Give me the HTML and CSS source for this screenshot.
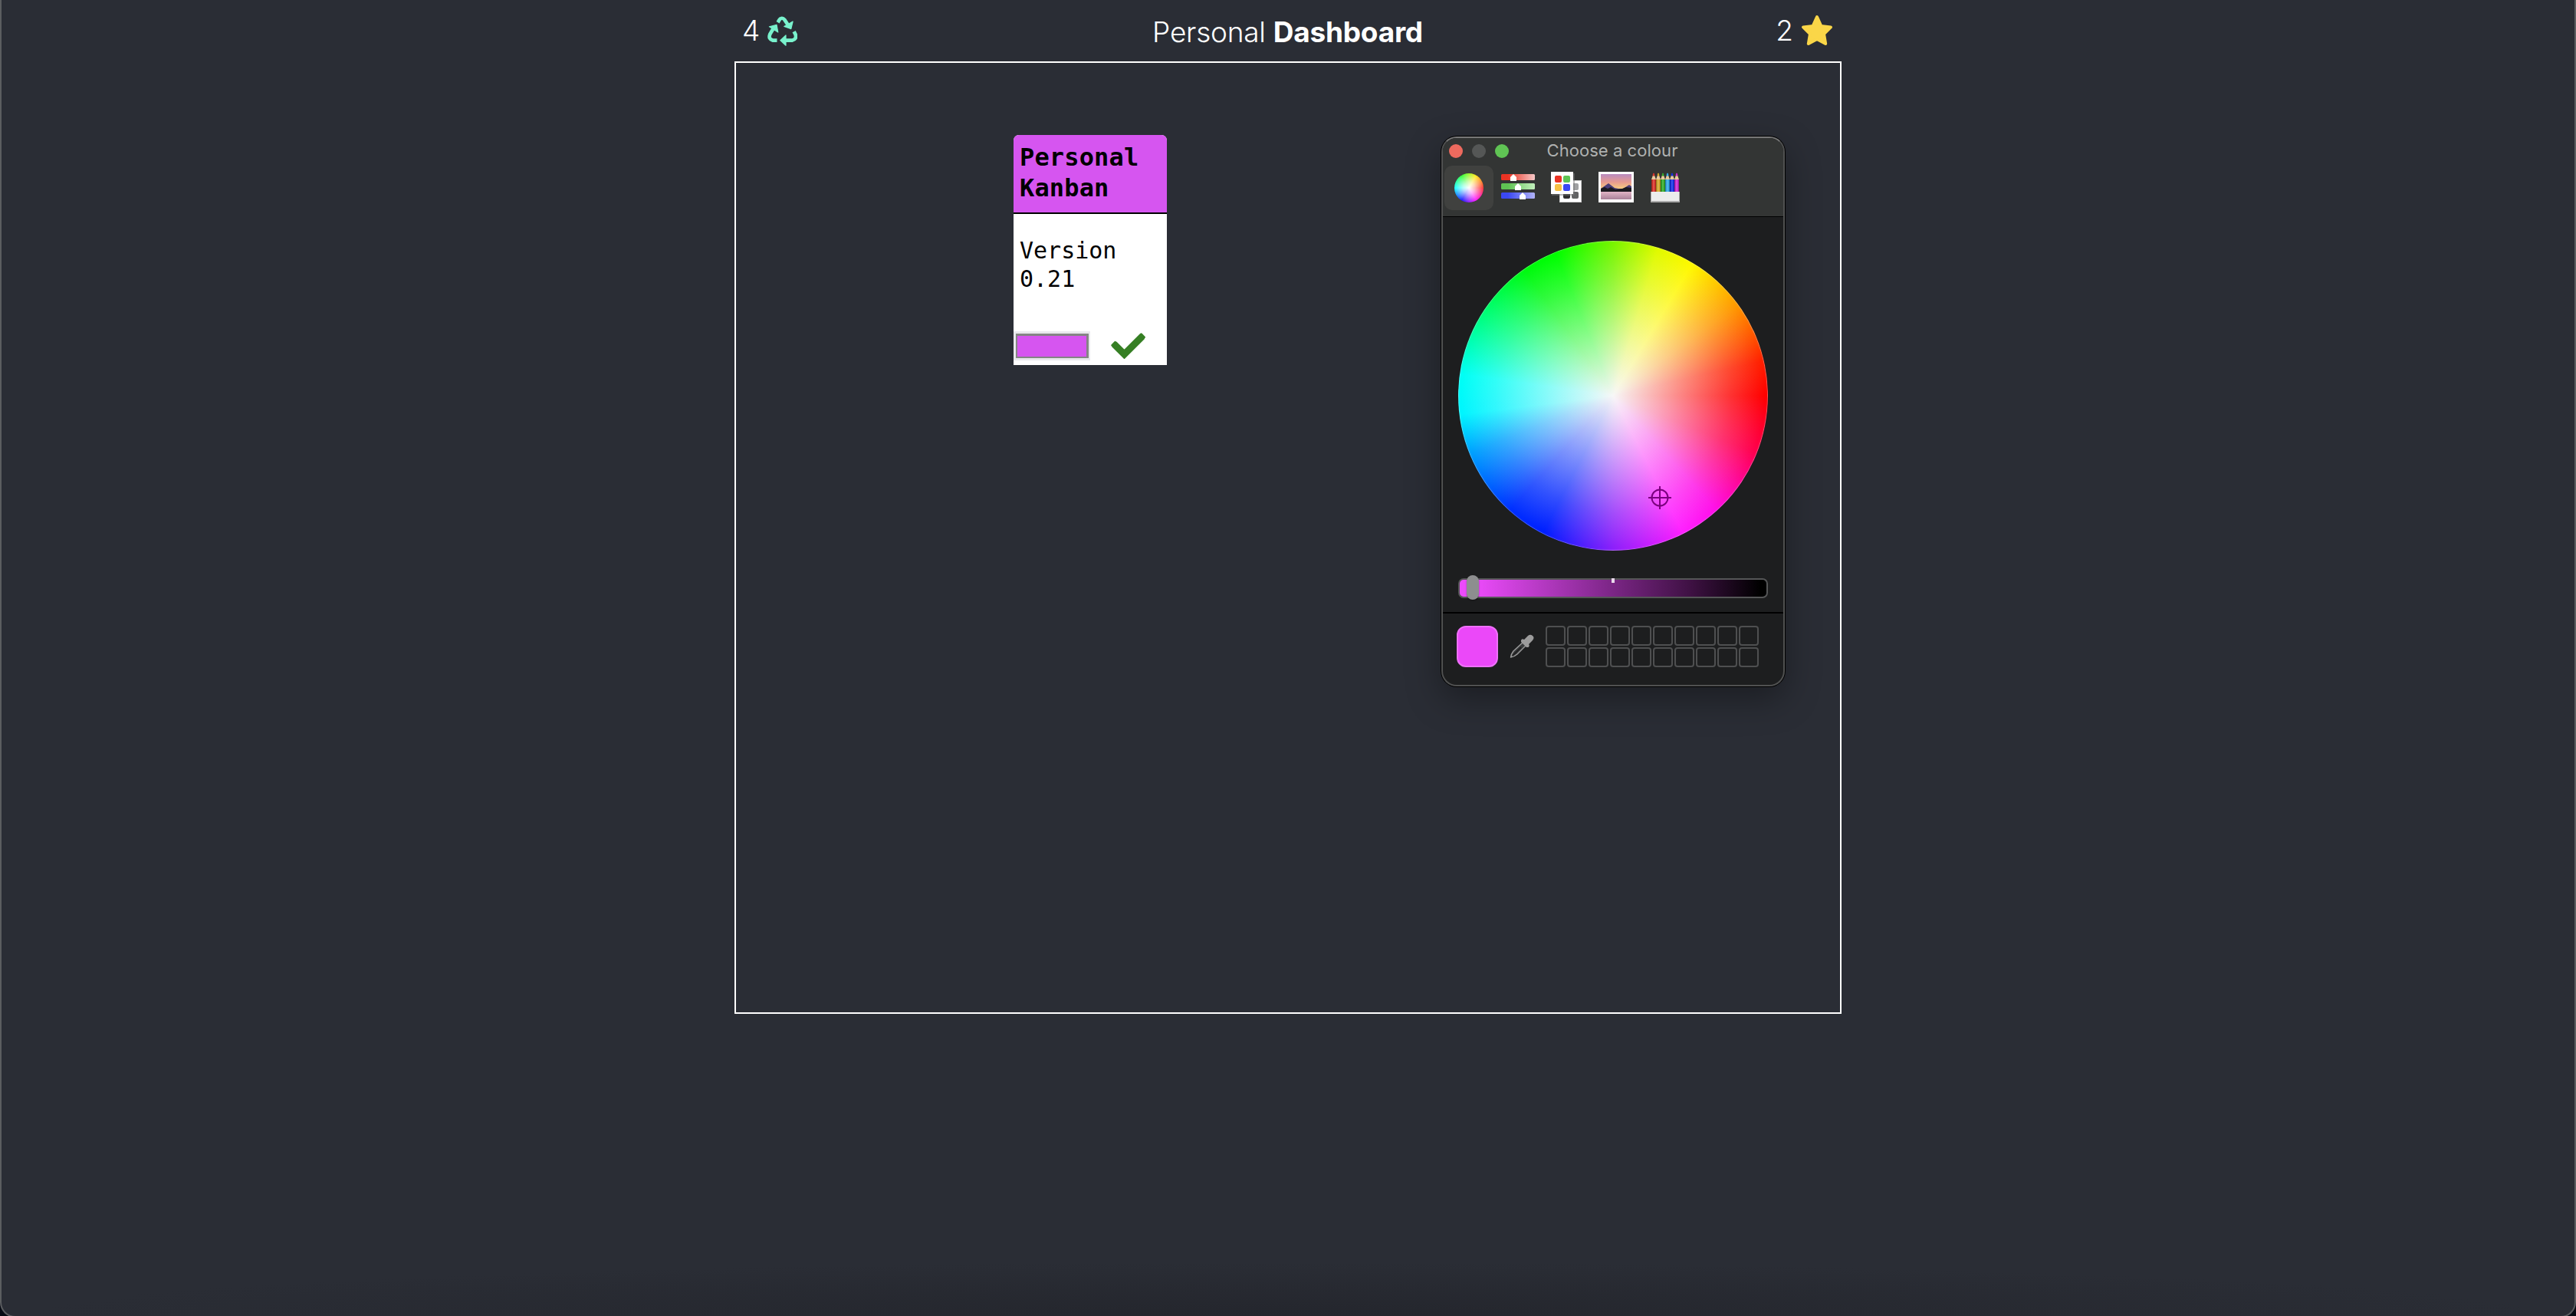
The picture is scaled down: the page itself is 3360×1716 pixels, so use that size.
FILE: index.html
```
<!DOCTYPE html>
<html lang="en">
<head>
<meta charset="utf-8">
<title>Personal Dashboard</title>
<link rel="stylesheet" href="styles.css">
</head>
<body>
<div class="frame">
  <div class="app">
    <header class="top">
      <div class="count count-left"><span>4</span>
        <svg class="recycle" viewBox="0 0 39 39" fill="none" stroke="#79f2cd" stroke-width="4.7">
          <path d="M13.6 8.2l1.8-3.1Q18.8.4 22.6 5.1L27 11.8"/>
          <path d="M34.600 20.200l2 3.800Q38.400 30 32.500 31.600H24"/>
          <path d="M12.500 31.600H7Q.800 30 3.300 23.600L9 14"/>
          <g fill="#79f2cd" stroke="#79f2cd" stroke-width="1.2" stroke-linejoin="round">
            <path d="M21.8 13.4L30.8 16.6 33.1 7z"/>
            <path d="M24 25V38.2L16.8 31.6z"/>
            <path d="M2.4 13.8L12 11.4 13.8 21z"/>
          </g>
        </svg>
      </div>
      <h1 class="title">Personal <b>Dashboard</b></h1>
      <div class="count count-right"><span>2</span>
        <svg class="star" viewBox="0 0 42 42"><path d="M21 3L26.3 14.9 39 16.4 30 25.2 32.2 38 21 32 9.8 38 12 25.2 3 16.4 15.7 14.9z" fill="#fad648" stroke="#fad648" stroke-width="4" stroke-linejoin="round"/></svg>
      </div>
    </header>
    <main class="board">
      <article class="card">
        <h2 class="card-head">Personal Kanban</h2>
        <p class="card-text">Version<br>0.21</p>
        <div class="card-foot">
          <span class="color-input"><i></i></span>
          <svg class="check" viewBox="0 0 46 34"><path d="M4.2 14.7L17.5 28 41 4.5" fill="none" stroke="#367f24" stroke-width="9"/><path d="M5.6 12.4L1.8 16.2M39.5 1.9L43.4 5.8" stroke="#367f24" stroke-width="3" stroke-linecap="round"/></svg>
        </div>
      </article>
    </main>
  </div>
  <section class="picker">
    <div class="picker-top">
      <div class="titlebar">
        <div class="lights"><i class="red"></i><i class="gray"></i><i class="green"></i></div>
        <span class="picker-title">Choose a colour</span>
      </div>
      <div class="tabs">
        <div class="tab"><span class="mini-wheel"></span></div>
        <svg class="ico" width="46" height="40" viewBox="0 0 46 40">
          <defs>
            <linearGradient id="gr"><stop offset=".2" stop-color="#ea3323"/><stop offset="1" stop-color="#f6c9c8"/></linearGradient>
            <linearGradient id="gg"><stop offset=".2" stop-color="#5fc453"/><stop offset="1" stop-color="#c3f0bd"/></linearGradient>
            <linearGradient id="gb"><stop offset=".2" stop-color="#3b48f2"/><stop offset="1" stop-color="#b1b3f7"/></linearGradient>
          </defs>
          <rect x="1" y="4" width="44" height="8" rx="1.5" fill="url(#gr)"/>
          <rect x="1" y="16" width="44" height="8" rx="1.5" fill="url(#gg)"/>
          <rect x="1" y="28" width="44" height="8" rx="1.5" fill="url(#gb)"/>
          <g fill="#fff"><path d="M13 8l4-4 4 4v5h-8z"/><path d="M19 20l4-4 4 4v5h-8z"/><path d="M25 32l4-4 4 4v5h-8z"/></g>
        </svg>
        <svg class="ico" width="42" height="42" viewBox="0 0 42 42">
          <rect x="12.5" y="12.5" width="28" height="28" fill="#fff" stroke="#ccc"/>
          <rect x="28" y="16" width="9" height="9" rx="2" fill="#a0a1a3"/><rect x="17" y="27" width="9" height="9" rx="2" fill="#303030"/><rect x="28" y="27" width="9" height="9" rx="2" fill="#626364"/>
          <path d="M2 31H31V3" fill="none" stroke="#777" stroke-width="1"/>
          <rect x="1" y="1" width="29" height="29" fill="#fff"/>
          <rect x="6" y="6" width="9" height="9" rx="2" fill="#ea3323"/><rect x="17" y="6" width="9" height="9" rx="2" fill="#5fc453"/><rect x="6" y="17" width="9" height="9" rx="2" fill="#f6c043"/><rect x="17" y="17" width="9" height="9" rx="2" fill="#3b48f2"/>
        </svg>
        <svg class="ico" width="48" height="42" viewBox="0 0 48 42">
          <defs>
            <linearGradient id="sky" x2="0" y2="1"><stop stop-color="#b98cc0"/><stop offset=".45" stop-color="#e79a91"/><stop offset=".85" stop-color="#f9cf7d"/></linearGradient>
            <linearGradient id="lake" x2="0" y2="1"><stop stop-color="#e2b5c6"/><stop offset="1" stop-color="#a98199"/></linearGradient>
          </defs>
          <rect x="1" y="1" width="46" height="40" fill="#fff"/>
          <rect x="4" y="4" width="40" height="23" fill="url(#sky)"/>
          <path d="M4 23l10-7 8 6 5 1 6 0 8-5 3 2v7H4z" fill="#4a3d78"/>
          <path d="M4 23l5-2 4 2 4-2 6 3 9-1 5-2 7 1v5H4z" fill="#1c1a20"/>
          <rect x="4" y="27" width="40" height="10" fill="url(#lake)"/>
        </svg>
        <svg class="ico" width="40" height="42" viewBox="0 0 40 42">
          <defs><g id="pencil"><path d="M0 10h6v17H0z" fill="currentColor"/><path d="M0 10h1.2v17H0zM5 10h1v17H5z" fill="#000" opacity=".25"/><path d="M2.2 10h1.4v17H2.2z" fill="#fff" opacity=".2"/><path d="M0 10l2-5.500h2L6 10z" fill="#eacb9d"/><path d="M1.800 5.500V3Q3 0 4.200 3V5.500z" fill="currentColor"/></g></defs>
          <use href="#pencil" x="2" y="1" color="#d9352d"/><use href="#pencil" x="8" y="1" color="#d4a82f"/><use href="#pencil" x="14" y="1" color="#35ad2b"/><use href="#pencil" x="20" y="1" color="#36aae7"/><use href="#pencil" x="26" y="1" color="#1733e8"/><use href="#pencil" x="32" y="1" color="#cd2bd0"/>
          <rect x="1" y="27" width="38" height="14" fill="#aaa"/><rect x="2" y="27" width="36" height="12" fill="#ececec"/>
        </svg>
      </div>
    </div>
    <div class="wheel-area">
      <div class="wheel">
        <svg class="cross" width="30" height="30" viewBox="0 0 30 30" fill="none" stroke="#7b007f" stroke-width="2"><circle cx="15" cy="15" r="10.5"/><path d="M15 0v30M0 15h30"/></svg>
      </div>
      <div class="slider"><i class="tick"></i><i class="thumb"></i></div>
    </div>
    <div class="swatches">
      <span class="current"></span>
      <svg class="dropper" width="32" height="32" viewBox="0 0 32 32">
        <path d="M18 10L5 22Q2 26 1.500 30Q6 29.500 10 26L22 14z" fill="#3a3c3d" stroke="#9c9c9c" stroke-width="1.4" stroke-linejoin="round"/>
        <path d="M4 28L15 17" stroke="#202122" stroke-width="2"/>
        <path d="M15 8Q16 5 19 7L24 2Q27-.5 30 2T30 8L25 13Q26.500 15 24.500 17H22L15 10z" fill="#9c9c9c"/>
      </svg>
      <div class="grid"><i></i><i></i><i></i><i></i><i></i><i></i><i></i><i></i><i></i><i></i><i></i><i></i><i></i><i></i><i></i><i></i><i></i><i></i><i></i><i></i></div>
    </div>
  </section>
</div>
</body>
</html>
```
FILE: styles.css
```
* { box-sizing: border-box; margin: 0; }
body { background: #070b14; height: 1716px; overflow: hidden; }
.frame { position: relative; height: 1718px; background: radial-gradient(1640px 70px at 50% 100%, #24262d, #2a2d35) #2a2d35; border: 2px solid #5b5d60; border-top: 0; border-radius: 0 0 20px 20px; }
.app { width: 1444px; margin: 0 auto; }
.top { height: 80px; display: flex; justify-content: space-between; color: #fff; font-family: Inter, "Liberation Sans", sans-serif; font-size: 37px; line-height: 84px; padding: 0 11px 0 10px; }
.count { display: flex; align-items: center; width: 140px; font-weight: 300; }
.count-right { justify-content: flex-end; }
.recycle { width: 39px; height: 39px; margin-left: 10px; }
.star { width: 42px; height: 42px; margin-left: 10px; }
.title { font-size: 37px; font-weight: 350; letter-spacing: -.25px; }
.title b { font-weight: 700; }
.board { height: 1242px; border: 2px solid #fff; padding: 94px 0 0 362px; }
.card { width: 200px; height: 300px; background: #fff; border-radius: 7px 7px 0 0; overflow: hidden; display: flex; flex-direction: column; color: #000; font-family: "DejaVu Sans Mono", monospace; }
.card-head { height: 103px; background: #d655f0; border-bottom: 2px solid #000; padding: 9px 8px; font-size: 32px; line-height: 40px; letter-spacing: .15px; }
.card-text { padding: 29px 8px 0; font-size: 30px; line-height: 37px; height: 153px; }
.card-foot { display: flex; }
.color-input { width: 100px; height: 38px; border: 3px solid #e9e9ed; border-right-width: 2px; }
.color-input i { display: block; height: 32px; background: #d655f0; border: 3px solid #858585; border-left-width: 2px; border-bottom-width: 2px; }
.check { width: 46px; height: 34px; margin: 2px 0 0 27px; }
.picker { position: absolute; left: 1878px; top: 178px; width: 448px; height: 717px; background: #1d1e1f; border: 2px solid #505151; border-top-color: #777; border-radius: 20px; box-shadow: 0 0 0 1px #000, 0 16px 45px rgba(0,0,0,.35); overflow: hidden; font-family: Inter, sans-serif; }
.picker-top { height: 103px; background: #333534; border-bottom: 1px solid #000; }
.titlebar { height: 36px; position: relative; text-align: center; color: #afb1b0; font-size: 22px; line-height: 33px; letter-spacing: .05px; }
.lights { position: absolute; left: 8px; top: 8px; display: flex; gap: 12px; }
.lights i { width: 18px; height: 18px; border-radius: 50%; }
.red { background: #ed6a5e; }
.gray { background: #555756; }
.green { background: #60c454; }
.picker-title { padding-right: 2px; }
.tabs { display: flex; align-items: flex-start; padding-left: 2px; }
.tab { width: 64px; height: 58px; border-radius: 10px; background: #40413f; display: grid; place-items: center; }
.mini-wheel { width: 38px; height: 38px; border-radius: 50%; background: radial-gradient(circle closest-side, #fff, rgba(255,255,255,.7) 40%, rgba(255,255,255,.1)), conic-gradient(from 90deg, #ff2020, #f0f 60deg, #00f 120deg, #0ff 180deg, #20ff20 240deg, #ffe600 300deg, #ff2020); }
.ico { margin-top: 7px; margin-left: 9px; }
.ico:nth-child(3) { margin-left: 19px; }
.ico:nth-child(4) { margin-left: 20px; }
.ico:nth-child(5) { margin-left: 20px; }
.wheel-area { height: 517px; padding: 31px 0 0 20px; border-bottom: 2px solid #000; }
.wheel { position: relative; width: 404px; height: 404px; border-radius: 50%; background: radial-gradient(circle closest-side, #f7f7f7 0, rgba(250,250,250,.55) 42%, rgba(250,250,250,.2) 76%, rgba(250,250,250,0) 98%), conic-gradient(from 90deg, #f00 0, #ff0050 22deg, #ff10e8 48deg, #ff20ff 63deg, #8c20fa 90deg, #0020ff 117deg, #0030ff 132deg, #00a0ff 158deg, #00f5ff 173deg, #00fff5 188deg, #00ff80 211deg, #00fa10 235deg, #00ff00 248deg, #78f500 270deg, #e0fa00 287deg, #fff800 301deg, #ff9800 324deg, #ff2000 347deg, #f00); box-shadow: inset 0 0 0 1px rgba(255,255,255,.3); }
.cross { position: absolute; left: 248px; top: 320px; }
.slider { position: relative; width: 404px; height: 26px; margin-top: 36px; border: 2px solid #555657; border-radius: 7px; background: linear-gradient(90deg, #ec4bfb 5%, #a534b2 33%, #762480 52%, #3f1144 75%, #000 98%); }
.tick { position: absolute; left: 198px; top: -2px; width: 4px; height: 6px; background: #ead8ec; }
.thumb { position: absolute; left: 9px; top: -6px; width: 16px; height: 32px; border-radius: 8px; background: #8d8e8f; box-shadow: 0 1px 2px rgba(0,0,0,.4); }
.swatches { display: flex; align-items: flex-start; padding: 16px 0 0 18px; }
.current { width: 54px; height: 54px; border-radius: 12px; background: #eb48f9; border: 2px solid #ee70f8; }
.dropper { margin: 11px 0 0 15px; }
.grid { display: grid; grid-template-columns: repeat(10, 26px); gap: 2px; margin-left: 15px; }
.grid i { height: 26px; border: 2px solid #4e4f50; border-radius: 4px; }
```
